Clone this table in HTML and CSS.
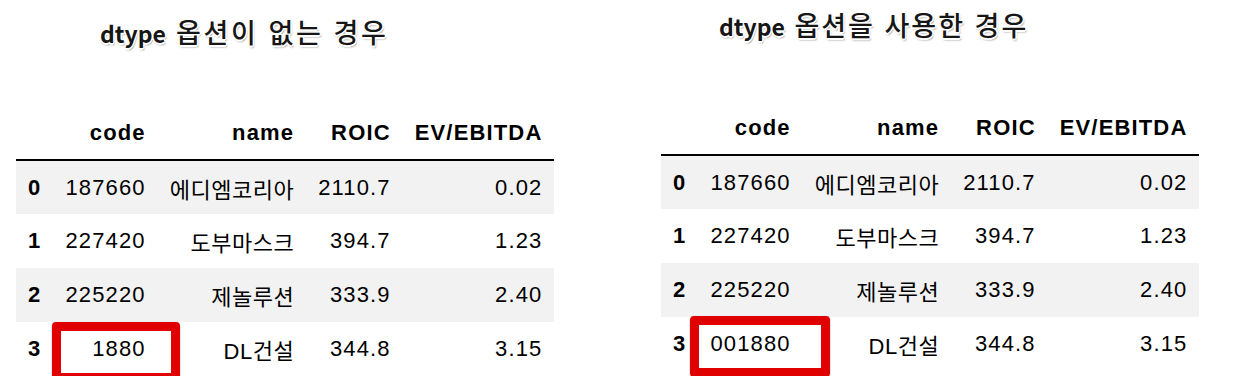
FILE: index.html
```html
<!DOCTYPE html>
<html lang="ko">
<head>
<meta charset="utf-8">
<link rel="stylesheet" href="styles.css">
</head>
<body>
<div class="page">
  <section class="panel panel-left">
    <h2 class="title"><span class="kw">dtype</span> 옵션이 없는 경우</h2>
    <div class="table-wrap">
      <table class="df">
        <thead>
          <tr><th class="idx"></th><th>code</th><th>name</th><th>ROIC</th><th>EV/EBITDA</th></tr>
        </thead>
        <tbody>
          <tr class="odd"><th class="idx">0</th><td>187660</td><td class="ko">에디엠코리아</td><td>2110.7</td><td>0.02</td></tr>
          <tr><th class="idx">1</th><td>227420</td><td class="ko">도부마스크</td><td>394.7</td><td>1.23</td></tr>
          <tr class="odd"><th class="idx">2</th><td>225220</td><td class="ko">제놀루션</td><td>333.9</td><td>2.40</td></tr>
          <tr><th class="idx">3</th><td>1880</td><td class="ko">DL건설</td><td>344.8</td><td>3.15</td></tr>
        </tbody>
      </table>
      <div class="mark mark-left"></div>
    </div>
  </section>
  <section class="panel panel-right">
    <h2 class="title"><span class="kw">dtype</span> 옵션을 사용한 경우</h2>
    <div class="table-wrap">
      <table class="df">
        <thead>
          <tr><th class="idx"></th><th>code</th><th>name</th><th>ROIC</th><th>EV/EBITDA</th></tr>
        </thead>
        <tbody>
          <tr class="odd"><th class="idx">0</th><td>187660</td><td class="ko">에디엠코리아</td><td>2110.7</td><td>0.02</td></tr>
          <tr><th class="idx">1</th><td>227420</td><td class="ko">도부마스크</td><td>394.7</td><td>1.23</td></tr>
          <tr class="odd"><th class="idx">2</th><td>225220</td><td class="ko">제놀루션</td><td>333.9</td><td>2.40</td></tr>
          <tr><th class="idx">3</th><td>001880</td><td class="ko">DL건설</td><td>344.8</td><td>3.15</td></tr>
        </tbody>
      </table>
      <div class="mark mark-right"></div>
    </div>
  </section>
</div>
</body>
</html>
```

FILE: styles.css
```css
html, body {
  margin: 0;
  padding: 0;
  background: #ffffff;
}

.page {
  display: flex;
  align-items: flex-start;
  padding-left: 16px;
  gap: 106px;
}

.panel {
  display: flex;
  flex-direction: column;
  width: 539px;
}

.panel-left {
  padding-top: 15px;
}

.panel-right {
  padding-top: 8px;
}

.title {
  margin: 0;
  height: 34px;
  line-height: 34px;
  font-family: "Noto Sans CJK KR", "Noto Sans", sans-serif;
  font-size: 27px;
  font-weight: 500;
  color: #161616;
  letter-spacing: 2px;
  white-space: nowrap;
  text-shadow:
    -1px -1px 0 #fff, 1px -1px 0 #fff, -1px 1px 0 #fff, 1px 1px 0 #fff,
    0 -1.5px 0 #fff, 0 1.5px 0 #fff, -1.5px 0 0 #fff, 1.5px 0 0 #fff,
    1px 2px 2px rgba(0, 0, 0, 0.55);
}

.panel-left .title {
  margin-left: 84px;
  letter-spacing: 2.6px;
}

.panel-right .title {
  margin-left: 58px;
}

.title .kw {
  font-size: 23px;
  font-weight: 700;
  letter-spacing: 0;
}

.table-wrap {
  position: relative;
  margin-top: 57px;
  align-self: flex-start;
}

.panel-right .table-wrap {
  margin-top: 59px;
}

.df {
  border-collapse: collapse;
  font-family: "Liberation Sans", Arial, "Noto Sans CJK KR", sans-serif;
  font-size: 22px;
  color: #000;
  letter-spacing: 1.15px;
}

.df th,
.df td {
  height: 54px;
  padding: 0 12px;
  text-align: right;
  vertical-align: middle;
  white-space: nowrap;
  box-sizing: border-box;
}

.df thead th {
  font-weight: 700;
  border-bottom: 2px solid #000;
}

.df tbody th.idx {
  font-weight: 700;
  text-align: left;
}

.df td.ko {
  letter-spacing: 0.5px;
}

.df tr.odd {
  background: #f2f2f2;
}

.mark {
  position: absolute;
  border: 9px solid #e10000;
  border-radius: 4px;
  box-sizing: border-box;
  box-shadow: 0 1px 2px rgba(0, 0, 0, 0.35);
}

.mark-left {
  left: 36px;
  top: 216px;
  width: 128px;
  height: 60px;
}

.mark-right {
  left: 29px;
  top: 215px;
  width: 140px;
  height: 61px;
}
```
